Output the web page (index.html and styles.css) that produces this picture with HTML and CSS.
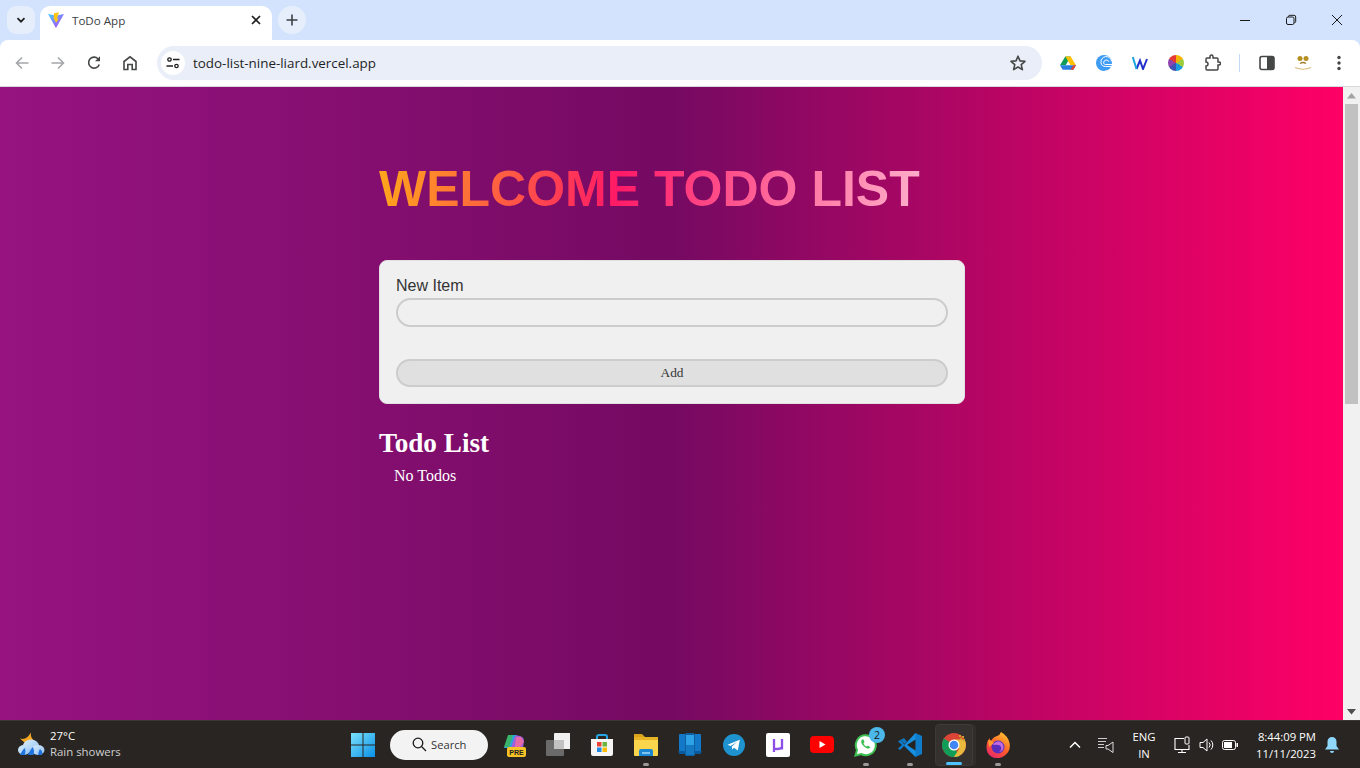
FILE: index.html
```html
<!DOCTYPE html>
<html lang="en">
<head>
    <meta charset="UTF-8">
    <meta name="viewport" content="width=device-width, initial-scale=1.0">
    <title>ToDo App</title>
    <link rel="stylesheet" href="styles.css">
</head>
<body>
    <header class="browser">
        <div class="tabstrip">
            <div class="tab-btn tab-list">
                <svg width="12" height="12" viewBox="0 0 12 12"><path d="M2.5 4.2 6 7.7l3.5-3.5" fill="none" stroke="#1f1f1f" stroke-width="1.7"/></svg>
            </div>
            <div class="tab">
                <svg class="favicon" width="16" height="16" viewBox="0 0 16 16">
                    <defs><linearGradient id="vite" x1="0" y1="0" x2="1" y2="1"><stop offset="0" stop-color="#41d1ff"/><stop offset="1" stop-color="#bd34fe"/></linearGradient></defs>
                    <path d="M0 2 8 3.4 16 2 8.3 15.6a.4.4 0 0 1-.7 0z" fill="url(#vite)"/>
                    <path d="M11 .2 6 1.2l-.4 6.6 1.5-.4-.3 2.4 1.5-.4-.3 2 2.7-5-1.6.3.5-2z" fill="#ffc517"/>
                </svg>
                <span class="tab-title">ToDo App</span>
                <svg class="tab-close" width="10" height="10" viewBox="0 0 10 10"><path d="M1 1l8 8M9 1 1 9" stroke="#1f1f1f" stroke-width="1.7"/></svg>
            </div>
            <div class="tab-btn new-tab">
                <svg width="12" height="12" viewBox="0 0 12 12"><path d="M6 .5v11M.5 6h11" stroke="#3c4043" stroke-width="1.6"/></svg>
            </div>
            <div class="window-btns">
                <svg width="12" height="12" viewBox="0 0 12 12"><path d="M1 6.5h10" stroke="#1a1a1a" stroke-width="1"/></svg>
                <svg width="12" height="12" viewBox="0 0 12 12"><rect x="1.5" y="3" width="7.5" height="7.5" rx="1.5" fill="none" stroke="#1a1a1a"/><path d="M3.5 3V2.5A1.2 1.2 0 0 1 4.7 1.3H9A1.7 1.7 0 0 1 10.7 3v4.5A1.2 1.2 0 0 1 9.5 8.700" fill="none" stroke="#1a1a1a"/></svg>
                <svg width="12" height="12" viewBox="0 0 12 12"><path d="M1 1l10 10M11 1 1 11" stroke="#1a1a1a" stroke-width="1"/></svg>
            </div>
        </div>
        <div class="toolbar">
            <div class="nav-icon">
                <svg width="16" height="16" viewBox="0 0 16 16"><path d="M14.500 8H2.500M8 2.500 2.500 8 8 13.500" fill="none" stroke="#a4a6a9" stroke-width="1.6"/></svg>
            </div>
            <div class="nav-icon">
                <svg width="16" height="16" viewBox="0 0 16 16"><path d="M1.500 8h12M8 2.500 13.500 8 8 13.500" fill="none" stroke="#a4a6a9" stroke-width="1.6"/></svg>
            </div>
            <div class="nav-icon">
                <svg width="16" height="16" viewBox="0 0 16 16"><path d="M13.300 9.500A5.500 5.500 0 1 1 12 3.700" fill="none" stroke="#444746" stroke-width="1.6"/><path d="M14 1.200v5h-5z" fill="#444746"/></svg>
            </div>
            <div class="nav-icon">
                <svg width="16" height="16" viewBox="0 0 16 16"><path d="M2 14.500V6.500L8 1.800l6 4.700v8h-3.800V9.500H5.800v5z" fill="none" stroke="#444746" stroke-width="1.600"/></svg>
            </div>
            <div class="omnibox">
                <div class="site-info">
                    <svg width="14" height="14" viewBox="0 0 14 14"><g fill="none" stroke="#1f1f1f" stroke-width="1.300"><circle cx="3.500" cy="3.500" r="1.700"/><path d="M7 3.500h6.500M.5 10H7"/><circle cx="10.500" cy="10" r="1.700"/></g></svg>
                </div>
                <span class="url">todo-list-nine-liard.vercel.app</span>
                <svg class="star" width="18" height="18" viewBox="0 0 18 18"><path d="M9 2.200l2 4.700 5 .4-3.800 3.300 1.200 5L9 13l-4.400 2.600 1.200-5L2 7.300l5-.4z" fill="none" stroke="#444746" stroke-width="1.600" stroke-linejoin="round"/></svg>
            </div>
            <div class="extensions">
                <div class="ext">
                    <svg width="16" height="14" viewBox="0 0 16 14"><path d="M5.300 0h5.400l-5 8.800H0z" fill="#0f9d58" transform="translate(0 .4)"/><path d="M5.300.4h5.400L16 9.200h-5.400z" fill="#ffc107"/><path d="M2.700 13.800 0 9.200h16l-2.700 4.600z" fill="#2a7de1"/><path d="M16 9.200l-2.700 4.600h-2.700l2.700-4.600z" fill="#ea4335"/></svg>
                </div>
                <div class="ext">
                    <svg width="16" height="16" viewBox="0 0 16 16"><circle cx="8" cy="8" r="8" fill="#3f9cf5"/><path d="M15.500 6.200A4.800 4.800 0 0 0 5 7.500c0 2.600 2 4 4.500 4h6v4.500h-6.500" fill="none" stroke="#fff" stroke-width="1"/><path d="M13 6.800A2.800 2.800 0 0 0 7.600 7.800c0 1 .9 1.700 2 1.700H16" fill="none" stroke="#fff" stroke-width="1"/></svg>
                </div>
                <div class="ext">
                    <svg width="16" height="14" viewBox="0 0 16 14"><path d="M4.500 13 8 4.500 11 13 15 3" fill="none" stroke="#2230c9" stroke-width="2"/><path d="M.8 1 4.500 13" stroke="#1aa5e0" stroke-width="2"/></svg>
                </div>
                <div class="ext">
                    <div class="color-wheel"></div>
                </div>
                <div class="ext">
                    <svg width="18" height="18" viewBox="0 0 18 18"><path d="M7 2.500A1.500 1.500 0 0 1 10 2.500V4h4a1 1 0 0 1 1 1v3h1a1.500 1.500 0 0 1 0 3h-1v4a1 1 0 0 1-1 1H4a1 1 0 0 1-1-1v-3a2 2 0 0 0 0-4V5a1 1 0 0 1 1-1h3z" fill="none" stroke="#444746" stroke-width="1.500"/></svg>
                </div>
                <div class="toolbar-sep"></div>
                <div class="ext">
                    <svg width="16" height="16" viewBox="0 0 16 16"><rect x="1" y="1.500" width="14" height="13" rx="2" fill="none" stroke="#444746" stroke-width="1.600"/><rect x="8" y="1.500" width="7" height="13" fill="#444746"/></svg>
                </div>
                <div class="ext">
                    <svg width="18" height="16" viewBox="0 0 18 16"><circle cx="6" cy="3.500" r="2.500" fill="#b58f22"/><circle cx="12" cy="3.500" r="2.500" fill="#b58f22"/><path d="M6 8.500q3-2 6 0" fill="none" stroke="#a07c2c" stroke-width="1.300"/><path d="M1 12.500q8 3.500 16 0" fill="none" stroke="#d9bb77" stroke-width="1.200"/></svg>
                </div>
                <div class="ext">
                    <svg width="4" height="16" viewBox="0 0 4 16"><circle cx="2" cy="2.500" r="1.700" fill="#444746"/><circle cx="2" cy="8" r="1.700" fill="#444746"/><circle cx="2" cy="13.500" r="1.700" fill="#444746"/></svg>
                </div>
            </div>
        </div>
    </header>

    <div class="viewport">
        <main class="page">
            <div class="app">
                <h1 class="app-title">WELCOME TODO LIST</h1>
                <form class="todo-form">
                    <label class="todo-label" for="item">New Item</label>
                    <input class="todo-input" id="item" type="text">
                    <button class="todo-add" type="button">Add</button>
                </form>
                <h2 class="list-title">Todo List</h2>
                <p class="list-empty">No Todos</p>
            </div>
        </main>
        <div class="scrollbar">
            <div class="scroll-arrow"><svg width="9" height="6" viewBox="0 0 9 6"><path d="M4.500 0 9 5.500H0z" fill="#a3a3a3"/></svg></div>
            <div class="scroll-track"><div class="scroll-thumb"></div></div>
            <div class="scroll-arrow"><svg width="9" height="6" viewBox="0 0 9 6"><path d="M4.500 5.500 9 0H0z" fill="#505050"/></svg></div>
        </div>
    </div>

    <footer class="taskbar">
        <div class="weather">
            <svg width="28" height="28" viewBox="0 0 28 28">
                <defs><linearGradient id="cloud" x1="0" y1="0" x2="1" y2="1"><stop offset="0" stop-color="#dcecfb"/><stop offset="1" stop-color="#8fc2f5"/></linearGradient></defs>
                <path d="M14 1.500q-1 5 3.500 8.500L8 12 3 7.500q5 1.500 8-2z" fill="#f5a623"/>
                <ellipse cx="14" cy="15" rx="8" ry="6.500" fill="url(#cloud)"/>
                <ellipse cx="7" cy="19" rx="6" ry="5" fill="url(#cloud)"/>
                <ellipse cx="21" cy="19" rx="6.500" ry="5" fill="url(#cloud)"/>
                <path d="M3 24q3-6 5-7 1 3 0 7zM11 24q3-7 5-8 2 4 .5 8zM21 24q1-5 2-6 3 2 2 6z" fill="#1f74e0"/>
            </svg>
            <div class="weather-text">
                <span class="temp">27°C</span>
                <span class="cond">Rain showers</span>
            </div>
        </div>
        <div class="task-center">
            <div class="task-item">
                <svg width="24" height="24" viewBox="0 0 24 24">
                    <defs><linearGradient id="win" x1="0" y1="0" x2="1" y2="1"><stop offset="0" stop-color="#7be3fb"/><stop offset="1" stop-color="#0a8fe6"/></linearGradient></defs>
                    <path d="M0 0h11.500v11.500H0zM12.500 0H24v11.500H12.500zM0 12.500h11.500V24H0zM12.500 12.500H24V24H12.500z" fill="url(#win)"/>
                </svg>
            </div>
            <div class="search-box">
                <svg width="15" height="15" viewBox="0 0 15 15"><circle cx="6" cy="6" r="4.800" fill="none" stroke="#1a1a1a" stroke-width="1.300"/><path d="M9.500 9.500 14 14" stroke="#1a1a1a" stroke-width="1.300"/></svg>
                <span>Search</span>
            </div>
            <div class="task-item task-first">
                <svg width="24" height="24" viewBox="0 0 24 24">
                    <path d="M2 15 6 5q1-3 4-3h5l-4 13z" fill="#2ea3d8"/><path d="M9 15 13 3q2-1 5 0 4 1 4 5l-1 7z" fill="#a35ddb"/><path d="M6 2h5L7 14H2z" fill="#38b56a"/><path d="M14 4h5l3 5-4 5h-5z" fill="#e56aa6"/>
                    <rect x="5" y="14" width="19" height="10" rx="2" fill="#f7c325"/>
                    <text class="pre-text" x="14.500" y="22">PRE</text>
                </svg>
            </div>
            <div class="task-item">
                <svg width="24" height="24" viewBox="0 0 24 24"><rect x="8" y="0" width="17" height="16" rx="1" fill="#f1f1f1"/><rect x="0" y="7" width="18" height="16" rx="1" fill="#6a6a6a"/><rect x="8" y="7" width="10" height="9" fill="#c2c2c2"/></svg>
            </div>
            <div class="task-item">
                <svg width="24" height="24" viewBox="0 0 24 24"><path d="M7 7V4a2 2 0 0 1 2-2h6a2 2 0 0 1 2 2v3" fill="none" stroke="#27a6e5" stroke-width="2"/><path d="M1 6h22v15a2 2 0 0 1-2 2H3a2 2 0 0 1-2-2z" fill="#f5f5f5"/><rect x="7" y="9" width="4.500" height="4.500" fill="#ea4335"/><rect x="12.500" y="9" width="4.500" height="4.500" fill="#6cb33f"/><rect x="7" y="14.500" width="4.500" height="4.500" fill="#1e88e5"/><rect x="12.500" y="14.500" width="4.500" height="4.500" fill="#fbbc05"/></svg>
            </div>
            <div class="task-item task-open">
                <svg width="26" height="24" viewBox="0 0 26 24"><path d="M1 1h8l3 3h-11z" fill="#d9a21b"/><path d="M1 4h24v3H1z" fill="#e8b324"/><path d="M1 7h24v15a1 1 0 0 1-1 1H2a1 1 0 0 1-1-1z" fill="#fbd54b"/><path d="M6 23v-5a2 2 0 0 1 2-2h10a2 2 0 0 1 2 2v5z" fill="#1b87d3"/><rect x="9" y="19" width="8" height="2" fill="#7fc5ef"/></svg>
            </div>
            <div class="task-item">
                <svg width="24" height="24" viewBox="0 0 24 24"><rect x="1" y="1" width="22" height="17" rx="1" fill="#1478c8"/><path d="M0 18h24l-1.500 3h-21z" fill="#0c5a9e"/><rect x="7" y="0" width="10" height="23" rx="1.500" fill="#0f5f9f"/><rect x="8" y="2" width="8" height="20" fill="#2ea2e6"/><rect x="8" y="12" width="8" height="10" fill="#1679c4"/></svg>
            </div>
            <div class="task-item">
                <svg width="22" height="22" viewBox="0 0 22 22"><circle cx="11" cy="11" r="11" fill="#1f93d0"/><path d="M4.500 10.800 16.800 5.800 14.800 16.500 11 13.800 9.200 15.500 8.800 12.500 14 8 7.500 11.900z" fill="#fff"/></svg>
            </div>
            <div class="task-item">
                <svg width="24" height="24" viewBox="0 0 24 24"><rect width="24" height="24" rx="2" fill="#fff"/><path d="M8 6v13M8 14.500q0 1.500 3 1.500 4 0 5-2M16 6v10.500" fill="none" stroke="#8b4fe8" stroke-width="2.300"/></svg>
            </div>
            <div class="task-item">
                <svg width="24" height="18" viewBox="0 0 24 18"><rect width="24" height="17" rx="4" fill="#f00"/><path d="M9.500 5v7l6-3.500z" fill="#fff"/></svg>
            </div>
            <div class="task-item task-open">
                <svg width="24" height="24" viewBox="0 0 24 24"><path d="M1.500 22.500 3 17A10 10 0 1 1 7 21z" fill="#fff" stroke="#3ec152" stroke-width="2"/><path d="M8 6.500c-1.500 1.500-1 4 1.500 6.500s5 3.500 7 1.500l-2.500-2-1.500 1c-1.500-.5-2.500-2-3-3l1-1.500-1-2.500z" fill="#3ec152"/></svg>
                <span class="badge">2</span>
            </div>
            <div class="task-item task-open">
                <svg width="24" height="24" viewBox="0 0 24 24"><path d="M17.500 0 24 3v18l-6.500 3L6 13z" fill="#0e7bcb"/><path d="M17.500 0v24L6 12z" fill="#1f9cf0" opacity=".6"/><path d="M17.500 6.500 9 12l8.500 5.500z" fill="#262320"/><path d="M2 7 0 8.500 4 12 0 15.500 2 17l5-5z" fill="#0e7bcb"/><path d="M2 7l4.500 4 2.500-2.500-3-3.500z" fill="#1473b8"/></svg>
            </div>
            <div class="task-item task-active">
                <svg width="24" height="24" viewBox="0 0 24 24"><circle cx="12" cy="12" r="12" fill="#db4437"/><path d="M12 12 1.600 18A12 12 0 0 1 2 5.500z" fill="#0f9d58"/><path d="M1.600 18 12 12l5 12H12A12 12 0 0 1 1.600 18z" fill="#0f9d58"/><path d="M12 6.500h10.600A12 12 0 0 1 12 24l5-8z" fill="#e8b93d"/><circle cx="12" cy="12" r="5.500" fill="#fff"/><circle cx="12" cy="12" r="4.300" fill="#4285f4"/><path d="M17 2h2v2h-2zM20 3h2v2h-2zM21 6h2v2h-2zM18 5h2v2h-2z" fill="#c9a227"/></svg>
            </div>
            <div class="task-item task-open">
                <svg width="24" height="26" viewBox="0 0 24 26">
                    <defs><linearGradient id="fox" x1=".8" y1="0" x2=".2" y2="1"><stop offset="0" stop-color="#ffc72e"/><stop offset=".55" stop-color="#ff5a2b"/><stop offset="1" stop-color="#e8246e"/></linearGradient></defs>
                    <path d="M15 0q7 4 8.500 11 1.500 7-4 12T6 25Q0 22 .5 14 1 9 3.500 6 3.500 8 5 9q2-4 6-5 3-1 4-4z" fill="url(#fox)"/>
                    <circle cx="12" cy="15" r="6.500" fill="#5b2dbd"/>
                    <path d="M7 13q2-4 6-3.500 4.500 1 4.500 5.500T13 20q3-2 2-5t-8-2z" fill="#c06be0"/>
                    <path d="M2 8q4 0 6 3l-5 4z" fill="#ff9a2e"/>
                </svg>
            </div>
        </div>
        <div class="tray">
            <svg class="tray-chevron" width="12" height="8" viewBox="0 0 12 8"><path d="M1 6.500l5-5 5 5" fill="none" stroke="#fff" stroke-width="1.500"/></svg>
            <svg class="tray-meet" width="16" height="16" viewBox="0 0 16 16"><path d="M0 1.500h9M0 4.500h8M0 7.500h6M0 10.500h6" stroke="#ccc"/><path d="M10 8.500l5-3.500v10.500l-5-3.500h-2v-3.500z" fill="none" stroke="#ddd"/></svg>
            <div class="lang"><span>ENG</span><span>IN</span></div>
            <svg class="tray-net" width="16" height="18" viewBox="0 0 16 18"><path d="M10 2.500H1v11h14V9M8 13.500v3M4 16.500h8" fill="none" stroke="#fff" stroke-width="1.100"/><rect x="11" y="1" width="4" height="7" rx="1" fill="none" stroke="#fff"/></svg>
            <svg class="tray-vol" width="16" height="16" viewBox="0 0 16 16"><path d="M1 5.500h3L8 2v12l-4-3.500H1z" fill="none" stroke="#fff"/><path d="M10 5.500a3.500 3.500 0 0 1 0 5M12 3.500a6.500 6.500 0 0 1 0 9" fill="none" stroke="#fff"/></svg>
            <svg class="tray-bat" width="16" height="10" viewBox="0 0 16 10"><rect x=".5" y=".5" width="13" height="9" rx="2" fill="none" stroke="#fff"/><rect x="2" y="2" width="8" height="6" fill="#fff"/><rect x="14.500" y="3" width="1.500" height="4" fill="#fff"/></svg>
            <div class="clock"><span>8:44:09 PM</span><span>11/11/2023</span></div>
            <svg class="tray-bell" width="14" height="16" viewBox="0 0 14 16"><path d="M7 0a4.500 4.500 0 0 1 4.500 4.500V9L14 12.500H0L2.500 9V4.500A4.500 4.500 0 0 1 7 0z" fill="#8fd8fb"/><path d="M5 14h4a2 2 0 0 1-4 0z" fill="#8fd8fb"/></svg>
        </div>
    </footer>
</body>
</html>
```

FILE: styles.css
```css
* {
    margin: 0;
    padding: 0;
    box-sizing: border-box;
}
html, body {
    height: 768px;
    overflow: hidden;
}
body {
    display: flex;
    flex-direction: column;
    font-family: 'Open Sans', sans-serif;
}

/* browser frame */
.browser {
    height: 87px;
    background: #d3e3fd;
    flex-shrink: 0;
}
.tabstrip {
    height: 40px;
    display: flex;
    align-items: flex-start;
    padding: 6px 0 0 7px;
}
.tab-btn {
    width: 28px;
    height: 28px;
    border-radius: 50%;
    display: flex;
    align-items: center;
    justify-content: center;
    background: #e6eefb;
}
.tab-list {
    border-radius: 9px;
}
.tab {
    width: 232px;
    height: 34px;
    margin-left: 5px;
    padding: 0 11px 6px 8px;
    background: #fff;
    border-radius: 10px 10px 0 0;
    display: flex;
    align-items: center;
}
.favicon {
    flex-shrink: 0;
}
.tab-title {
    margin-left: 8px;
    flex: 1;
    font-size: 11.6px;
    color: #3c4043;
}
.new-tab {
    margin-left: 6px;
}
.window-btns {
    margin-left: auto;
    display: flex;
    align-items: center;
    width: 104px;
    height: 28px;
    margin-right: 17px;
    justify-content: space-between;
}
.window-btns svg {
    flex-shrink: 0;
}
.toolbar {
    height: 47px;
    background: #fff;
    border-radius: 8px 8px 0 0;
    border-bottom: 1px solid #d6d9dc;
    display: flex;
    align-items: center;
    padding: 0 0 1px 4px;
}
.nav-icon {
    width: 36px;
    height: 36px;
    display: flex;
    align-items: center;
    justify-content: center;
}
.omnibox {
    width: 885px;
    height: 34px;
    margin-left: 9px;
    background: #e9eef8;
    border-radius: 17px;
    display: flex;
    align-items: center;
    padding: 0 15px 0 4px;
}
.site-info {
    width: 24px;
    height: 24px;
    border-radius: 50%;
    background: #fff;
    display: flex;
    align-items: center;
    justify-content: center;
}
.url {
    margin-left: 8px;
    flex: 1;
    font-size: 13.4px;
    color: #1f1f1f;
}
.extensions {
    display: flex;
    align-items: center;
    margin-left: 8px;
}
.ext {
    width: 36px;
    height: 36px;
    display: flex;
    align-items: center;
    justify-content: center;
}
.color-wheel {
    width: 16px;
    height: 16px;
    border-radius: 50%;
    background: conic-gradient(#f4b400 0 60deg, #9ccc3c 60deg 120deg, #1a9be0 120deg 180deg, #3f51b5 180deg 240deg, #8e44ad 240deg 300deg, #e53935 300deg);
}
.toolbar-sep {
    width: 1px;
    height: 18px;
    margin: 0 9px;
    background: #c5d8f6;
}

/* page */
.viewport {
    height: 633px;
    display: flex;
    flex-shrink: 0;
}
.page {
    flex: 1;
    background: linear-gradient(to right, #961380, #750a62 50%, #ff0066);
    padding-top: 72px;
    overflow: hidden;
}
.app {
    width: 586px;
    margin-left: 379px;
}
.app-title {
    display: inline-block;
    font-family: 'Liberation Sans', Arial, sans-serif;
    font-size: 50px;
    font-weight: bold;
    line-height: 60px;
    white-space: nowrap;
    background: linear-gradient(100deg, #ffa81a, #ff1a66 44%, #ffb0cc);
    -webkit-background-clip: text;
    background-clip: text;
    color: transparent;
}
.todo-form {
    margin-top: 41px;
    height: 144px;
    padding: 16px;
    background: #f0f0f0;
    border: 1px solid #e0e0e0;
    border-radius: 8px;
    display: flex;
    flex-direction: column;
    color: #333;
}
.todo-label {
    font-family: 'Liberation Sans', Arial, sans-serif;
    font-size: 16px;
    line-height: 20px;
    margin-top: -1px;
    margin-bottom: 2px;
}
.todo-input {
    height: 29px;
    background: transparent;
    border: 2px solid #ccc;
    border-radius: 15px;
}
.todo-add {
    height: 28px;
    margin-top: 32px;
    background: #e0e0e0;
    border: 2px solid #ccc;
    border-radius: 15px;
    font-family: 'Liberation Serif', 'Times New Roman', serif;
    font-size: 13.33px;
    color: #333;
}
.list-title {
    margin-top: 24px;
    font-family: 'Liberation Serif', 'Times New Roman', serif;
    font-size: 27.2px;
    line-height: 31px;
    color: #fff;
}
.list-empty {
    margin: 8px 0 0 15px;
    font-family: 'Liberation Serif', 'Times New Roman', serif;
    font-size: 16px;
    line-height: 18px;
    color: #fff;
}
.scrollbar {
    width: 17px;
    background: #f1f1f1;
    display: flex;
    flex-direction: column;
}
.scroll-arrow {
    height: 17px;
    display: flex;
    align-items: center;
    justify-content: center;
}
.scroll-track {
    flex: 1;
}
.scroll-thumb {
    height: 300px;
    margin: 0 2px;
    background: #c1c1c1;
}

/* taskbar */
.taskbar {
    height: 48px;
    flex-shrink: 0;
    background: #282522;
    border-top: 1px solid #3a3835;
    display: flex;
    align-items: center;
    color: #fff;
    position: relative;
}
.weather {
    width: 341px;
    padding-left: 17px;
    display: flex;
    align-items: center;
    gap: 5px;
}
.weather-text {
    display: flex;
    flex-direction: column;
    font-size: 11.4px;
    line-height: 16px;
    margin-top: -2px;
}
.cond {
    color: #d0d0d0;
}
.task-center {
    display: flex;
    align-items: center;
}
.task-item {
    width: 44px;
    height: 40px;
    display: flex;
    align-items: center;
    justify-content: center;
    position: relative;
    flex-shrink: 0;
}
.task-first {
    margin-left: 4px;
}
.task-open::after {
    content: "";
    position: absolute;
    bottom: -1px;
    left: 19px;
    width: 6px;
    height: 3px;
    border-radius: 2px;
    background: #9a9a9a;
}
.task-active {
    width: 38px;
    height: 42px;
    margin: 0 3px;
    background: #34312f;
    border-radius: 4px;
    border: 1px solid #3d3a38;
    box-shadow: 3px 0 0 #302d2b;
}
.task-active::after {
    content: "";
    position: absolute;
    bottom: 0;
    left: 10px;
    width: 16px;
    height: 3px;
    border-radius: 2px;
    background: #4cc2ff;
}
.search-box {
    width: 98px;
    height: 30px;
    margin-left: 5px;
    background: #f3f3f3;
    border-radius: 15px;
    display: flex;
    align-items: center;
    padding-left: 22px;
    gap: 4px;
    color: #333;
    font-size: 11.2px;
}
.pre-text {
    font-family: 'Liberation Sans', Arial, sans-serif;
    font-size: 7px;
    font-weight: bold;
    text-anchor: middle;
    fill: #222;
}
.badge {
    position: absolute;
    top: 2px;
    right: 3px;
    width: 16px;
    height: 16px;
    border-radius: 50%;
    background: #4cb8ea;
    color: #1a1a1a;
    font-size: 10.5px;
    line-height: 16px;
    text-align: center;
}
.tray {
    flex: 1;
    display: flex;
    align-items: center;
    font-size: 11.3px;
    position: relative;
}
.tray-chevron {
    margin-left: 49px;
}
.tray-meet {
    margin-left: 17px;
}
.lang {
    width: 34px;
    margin-left: 13px;
    display: flex;
    flex-direction: column;
    align-items: center;
    line-height: 17px;
}
.tray-net {
    margin-left: 13px;
}
.tray-vol {
    margin-left: 9px;
}
.tray-bat {
    margin-left: 7px;
}
.clock {
    width: 72px;
    margin-left: 6px;
    display: flex;
    flex-direction: column;
    align-items: flex-end;
    line-height: 17px;
}
.tray-bell {
    margin-left: 9px;
}
```
